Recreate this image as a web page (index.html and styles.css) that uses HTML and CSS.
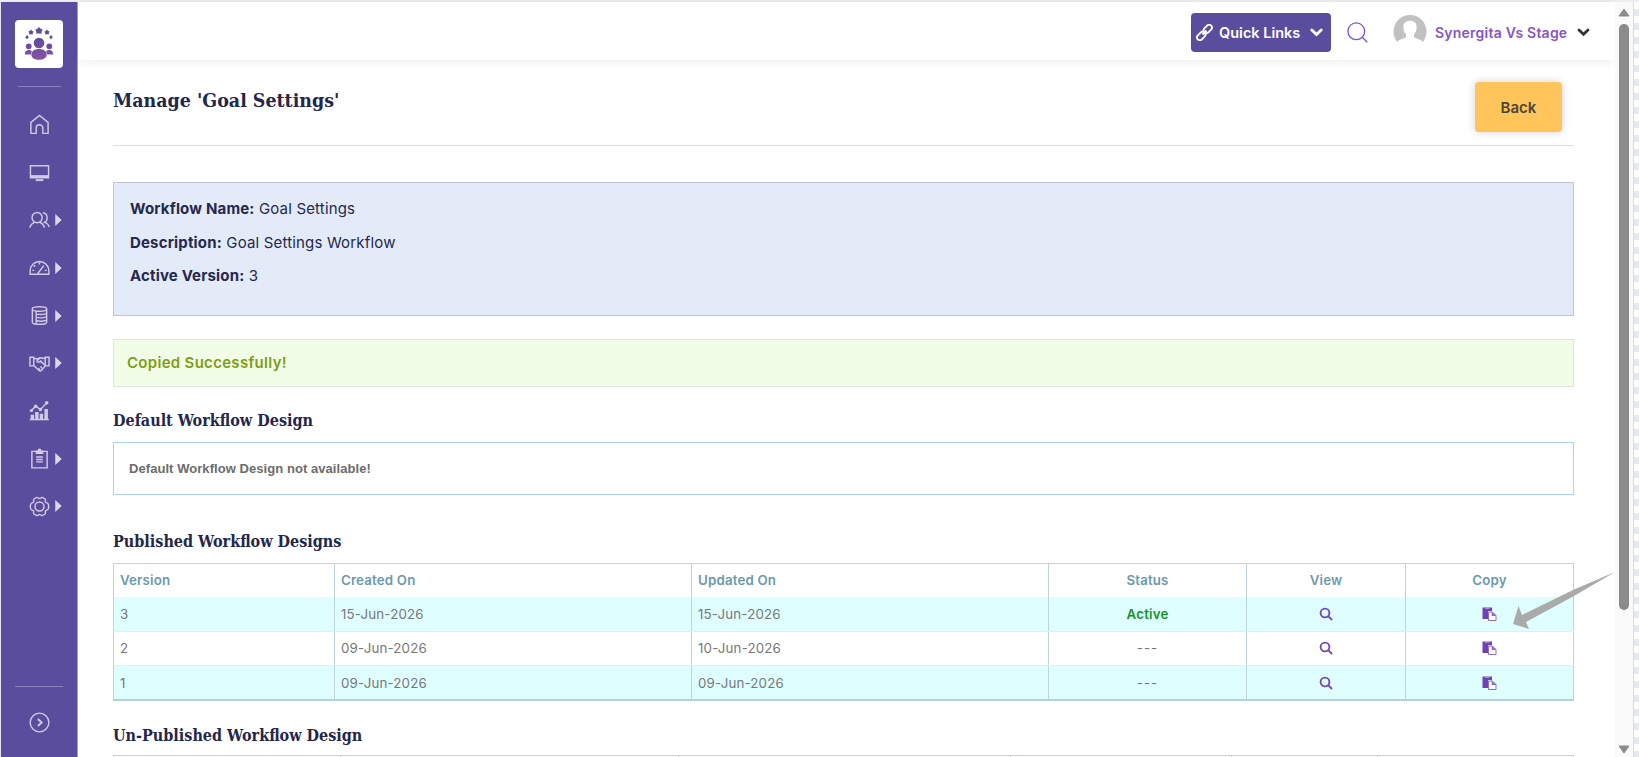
FILE: index.html
```html
<!DOCTYPE html>
<html lang="en">
<head>
    <meta charset="UTF-8">
    <meta name="viewport" content="width=device-width, initial-scale=1.0">
    <title>Manage Goal Settings</title>
    <link rel="stylesheet" href="styles.css">
</head>
<body>
    <!-- shared icons -->
    <svg class="sprite" width="0" height="0">
        <symbol id="caret" viewBox="0 0 7 13"><path d="M0 0L7 6.5L0 13z" fill="#dcd8ea"/></symbol>
        <symbol id="view" viewBox="0 0 14 14"><g fill="none" stroke="#7648b8" stroke-width="1.9"><circle cx="6" cy="6" r="4.4"/><path d="M9.2 9.2L13 13"/></g></symbol>
        <symbol id="copy" viewBox="0 0 15 14">
            <path d="M.5.5H10V4H6v8H.5z" fill="#7040b5"/>
            <path d="M3 1.300h4.500" stroke="#cbbbe6" stroke-width=".8"/>
            <path d="M6.500 5h3.700l3.800 3.500v5H6.500z" fill="#fff" stroke="#8d6ac6"/>
            <path d="M9.700 4.500l4.800 4.500H9.700z" fill="#8d6ac6"/>
        </symbol>
    </svg>

    <div class="app">
        <aside class="sidebar">
            <div class="logo">
                <svg width="30" height="34" viewBox="0 0 30 34">
                    <defs>
                        <linearGradient id="logoFill" x1="0" y1="0" x2="0" y2="34" gradientUnits="userSpaceOnUse">
                            <stop offset=".35" stop-color="#5b4ea0"/>
                            <stop offset="1" stop-color="#8c52a5"/>
                        </linearGradient>
                    </defs>
                    <g fill="url(#logoFill)">
                        <path d="M15 0l1.600 1.800 2.100.8-1 2-.2 2.200-2.500-.4-2.500.4-.2-2.200-1-2 2.100-.8z"/>
                        <path d="M7 2.600l1.200 1.300 1.500.6-.9 1.400-.1 1.700L7 7.200l-1.700.4-.1-1.700-.9-1.400 1.500-.6z"/>
                        <path d="M23 2.600l1.200 1.300 1.500.6-.9 1.400-.1 1.700-1.700-.4-1.700.4-.1-1.700-.9-1.400 1.500-.6z"/>
                        <path d="M3 8.100l1.800 2.100L3 12.300 1.200 10.200z"/>
                        <path d="M27 8.100l1.800 2.100L27 12.300l-1.800-2.100z"/>
                        <circle cx="15" cy="16" r="5.300"/>
                        <circle cx="4.700" cy="19.300" r="2.900"/>
                        <circle cx="25.300" cy="19.300" r="2.900"/>
                        <path d="M.8 27.500c0-3.300 1.800-4.600 4-4.600 1.300 0 2.300.4 3 1.300L7 27.500z"/>
                        <path d="M29.200 27.500c0-3.300-1.800-4.600-4-4.600-1.300 0-2.300.4-3 1.300l.8 3.300z"/>
                        <path d="M7.400 28c0-4 3.200-6 7.600-6s7.600 2 7.600 6c0 3-3.400 4.800-7.600 4.800S7.400 31 7.400 28z"/>
                    </g>
                </svg>
            </div>
            <div class="divider"></div>
            <nav class="menu">
                <a class="menu-item"><svg class="icon" viewBox="0 0 22 22"><path d="M2 8.800L11 1.500l9 7.300v11.500h-5.500v-5.500a3.500 3.500 0 0 0-7 0v5.500H2z"/></svg></a>
                <a class="menu-item"><svg class="icon" viewBox="0 0 22 22"><path d="M1.500 4h19v12.500h-19z"/><path d="M1.500 15h19" stroke-width="2.500"/><path d="M7 19h8" stroke-width="2"/></svg></a>
                <a class="menu-item"><svg class="icon" viewBox="0 0 22 22"><circle cx="8.500" cy="8" r="5.300"/><path d="M.8 18.500c.8-3 2.700-4.700 5-5.500M11.200 13c2.400.8 4.200 2.500 5 5.500M14.500 2.800c5.200.3 6 8 1.700 10.200 2.600.8 4.400 2.500 5 5"/></svg><svg class="caret"><use href="#caret"/></svg></a>
                <a class="menu-item"><svg class="icon" viewBox="0 0 22 22"><path d="M1.200 18v-3.500a9.800 9.800 0 0 1 19.600 0V18z"/><path d="M9 17.500L15.500 9M11 5.500v2.300M5 8.800l1.500 1.300M3.500 14h2M16.500 14h2"/></svg><svg class="caret"><use href="#caret"/></svg></a>
                <a class="menu-item"><svg class="icon" viewBox="0 0 22 22"><path d="M3.500 4v14c0 3 15 3 15 0V4c0-3-15-3-15 0zM3.500 4.500c0 2.700 15 2.700 15 0M7 9c3 1.200 7 1.300 11.500 0M7 12.500c3 1.200 7 1.300 11.500 0M7 16c3 1.200 7 1.300 11.500 0M7.500 7v12"/></svg><svg class="caret"><use href="#caret"/></svg></a>
                <a class="menu-item"><svg class="icon" viewBox="0 0 22 22"><path d="M1 4.500h4v9H1zM17 4.500h4v9h-4zM5 5.500l3.500.8 3-1.300 5.500.8M5 13l5.500 5.300c1 .7 2 .5 2.700-.3L17 13.500M11.500 5L8.300 8.500c.6 1.800 2.500 1.500 4 0L17 13M10 16l1.500 1.500M12 14l1.800 2"/></svg><svg class="caret"><use href="#caret"/></svg></a>
                <a class="menu-item"><svg class="icon" viewBox="0 0 22 22"><path d="M.8 20.500h20"/><path d="M3.500 20v-4.500M8.200 20v-7.500M13 20v-5.500M18 20V9.500" stroke-width="3.600"/><path d="M2.500 11L7 6.500l5 3.500 6.500-7"/><g class="dot"><circle cx="2.500" cy="11" r="1.700"/><circle cx="7" cy="6.500" r="1.800"/><circle cx="12" cy="10" r="1.800"/><circle cx="18.500" cy="3" r="1.900"/></g></svg></a>
                <a class="menu-item"><svg class="icon" viewBox="0 0 22 22"><path d="M3 3.500h16v17.300H3z"/><path class="dot" d="M7 6.300V2.500h2a2 2 0 0 1 4 0h2v3.800z"/><path d="M7.500 9.500h7M7.500 12h7M7.500 14.500h7"/></svg><svg class="caret"><use href="#caret"/></svg></a>
                <a class="menu-item"><svg class="icon" viewBox="0 0 22 22"><path d="M8 1.500c1.200-.5 1.800 1.200 3 1.200s1.800-1.700 3-1.200l2.800 1.600c1 .9-.1 2.400.5 3.300s2.500.7 2.900 1.900v.2l.5 2.500-.5 2.500c-.4 1.300-2.300 1.100-2.900 2.100s.5 2.400-.5 3.300L14 20.500c-1.200.5-1.800-1.200-3-1.200s-1.800 1.700-3 1.200l-2.800-1.600c-1-.9.1-2.300-.5-3.300s-2.500-.8-2.900-2.100L1.300 11l.5-2.500c.4-1.300 2.300-1.100 2.900-2.100s-.5-2.400.5-3.300z"/><circle cx="11" cy="11" r="4.700"/></svg><svg class="caret"><use href="#caret"/></svg></a>
            </nav>
            <div class="divider wide"></div>
            <a class="expand"><svg class="icon" viewBox="0 0 22 22"><circle cx="11" cy="11" r="9.800"/><path d="M9.300 7.300l4 3.700-4 3.700" stroke-width="1.900"/></svg></a>
        </aside>

        <div class="page">
            <header class="topbar">
                <button class="quick-links">
                    <svg width="17" height="17" viewBox="0 0 17 17" fill="none" stroke="#fff" stroke-width="1.900"><rect x="7" y="2.200" width="9.500" height="5.600" rx="2.800" transform="rotate(-45 11.700 5)"/><rect x=".5" y="9.200" width="9.500" height="5.600" rx="2.800" transform="rotate(-45 5.200 12)"/><path d="M6.500 10.500l4-4"/></svg>
                    <span>Quick Links</span>
                    <svg class="chevron" viewBox="0 0 13 9"><path d="M1.800 2l4.700 4.500L11.200 2" stroke="#fff"/></svg>
                </button>
                <svg class="search" viewBox="0 0 21 21" fill="none" stroke="#7f56c2" stroke-width="1.300"><circle cx="9.300" cy="9.300" r="8.400"/><path d="M15.300 15.300l5 5"/></svg>
                <svg class="avatar" viewBox="0 0 34 34"><path d="M4.300 28A16.500 16.500 0 1 1 29.700 28C28 25.500 23.500 24.800 21 23.300v-3c2-2 2.600-4.500 2.600-7.300 0-4-2.600-6.200-6.600-6.200S10.400 9 10.400 13c0 2.800.6 5.300 2.600 7.300v3C10.500 24.800 6 25.500 4.300 28z" fill="#c1c1c1"/></svg>
                <span class="user-name">Synergita Vs Stage</span>
                <svg class="chevron" viewBox="0 0 13 9"><path d="M2 2l4.500 4.300L11 2" stroke="#333"/></svg>
            </header>

            <main class="content">
                <div class="page-head">
                    <h1>Manage 'Goal Settings'</h1>
                    <button class="back">Back</button>
                </div>

                <section class="summary">
                    <p><b>Workflow Name:</b> Goal Settings</p>
                    <p><b>Description:</b> Goal Settings Workflow</p>
                    <p><b>Active Version:</b> 3</p>
                </section>

                <div class="success">Copied Successfully!</div>

                <h2 class="default-title">Default Workflow Design</h2>
                <div class="empty">Default Workflow Design not available!</div>

                <h2 class="published-title">Published Workflow Designs</h2>
                <table class="designs">
                    <colgroup>
                        <col class="col-version"><col class="col-date"><col class="col-date"><col class="col-status"><col class="col-view"><col>
                    </colgroup>
                    <thead>
                        <tr><th>Version</th><th>Created On</th><th>Updated On</th><th class="center">Status</th><th class="center">View</th><th class="center">Copy</th></tr>
                    </thead>
                    <tbody>
                        <tr>
                            <td>3</td><td>15-Jun-2026</td><td>15-Jun-2026</td><td class="center active">Active</td>
                            <td class="center"><svg class="view"><use href="#view"/></svg></td><td class="center"><svg class="copy"><use href="#copy"/></svg></td>
                        </tr>
                        <tr>
                            <td>2</td><td>09-Jun-2026</td><td>10-Jun-2026</td><td class="center dash">---</td>
                            <td class="center"><svg class="view"><use href="#view"/></svg></td><td class="center"><svg class="copy"><use href="#copy"/></svg></td>
                        </tr>
                        <tr>
                            <td>1</td><td>09-Jun-2026</td><td>09-Jun-2026</td><td class="center dash">---</td>
                            <td class="center"><svg class="view"><use href="#view"/></svg></td><td class="center"><svg class="copy"><use href="#copy"/></svg></td>
                        </tr>
                    </tbody>
                </table>

                <h2 class="unpublished-title">Un-Published Workflow Design</h2>
                <div class="next-table"><i></i><i></i><i></i><i></i><i></i><i></i></div>
            </main>
        </div>

        <div class="scrollbar">
            <svg width="12" height="9" viewBox="0 0 12 9"><path d="M6 1l5 7H1z" fill="#8b8b8b" stroke="#8b8b8b" stroke-linejoin="round"/></svg>
            <div class="thumb"></div>
            <svg class="down" width="12" height="9" viewBox="0 0 12 9"><path d="M6 8l5-7H1z" fill="#8b8b8b" stroke="#8b8b8b" stroke-linejoin="round"/></svg>
        </div>
        <div class="edge"></div>
    </div>

    <!-- arrow pointing at the copy action -->
    <svg class="arrow" viewBox="0 0 102 58"><path d="M102 0L61 17.500 9 43 5.500 34 0 52l16 5-3-7L61 24z" fill="#aaa"/></svg>
</body>
</html>
```
FILE: styles.css
```css
* {
    box-sizing: border-box;
    margin: 0;
    padding: 0;
}

body {
    height: 757px;
    overflow: hidden;
    background: #fff;
    font-family: 'Inter', sans-serif;
    color: #25284b;
}

svg {
    display: block;
    flex: none;
}

.sprite {
    position: absolute;
}

.app {
    display: flex;
    height: 757px;
    border-top: 2px solid #eeeeee;
    border-left: 1px solid #dfe5e9;
}

/* sidebar */
.sidebar {
    display: flex;
    flex-direction: column;
    flex: none;
    align-items: center;
    width: 77px;
    padding-top: 18px;
    background: #5b4d9d;
    border-right: 1px solid #a79fcf;
}

.logo {
    display: flex;
    align-items: center;
    justify-content: center;
    width: 48px;
    height: 48px;
    background: #fff;
    border-radius: 4px;
}

.divider {
    width: 43px;
    height: 1px;
    margin-top: 18px;
    background: #8c83ba;
}

.divider.wide {
    width: 48px;
    margin-top: auto;
}

.menu {
    width: 100%;
    margin-top: 14px;
}

.menu-item {
    display: flex;
    align-items: center;
    height: 47.7px;
    padding-left: 28px;
    gap: 5px;
}

.icon {
    width: 21px;
    height: 21px;
    fill: none;
    stroke: #d0cbe3;
    stroke-width: 1.5;
}

.icon .dot {
    fill: #d0cbe3;
    stroke: none;
}

.caret {
    width: 7px;
    height: 12px;
}

.expand {
    margin: 25px 0 24px;
}

/* top bar */
.page {
    display: flex;
    flex-direction: column;
    flex: 1;
    background: #fff;
}

.topbar {
    display: flex;
    flex: none;
    align-items: center;
    justify-content: flex-end;
    height: 58px;
    padding: 2px 25px 0 0;
    box-shadow: 0 2px 10px rgba(0, 0, 0, 0.07);
}

.quick-links {
    display: flex;
    align-items: center;
    width: 140px;
    height: 39px;
    padding: 0 8px 0 5px;
    background: #5b4d9d;
    border: 0;
    border-radius: 4px;
    font: 600 14.5px 'Inter', sans-serif;
    color: #fff;
}

.quick-links span {
    flex: 1;
    text-align: left;
    padding-left: 6px;
    white-space: nowrap;
}

.chevron {
    width: 13px;
    height: 9px;
    fill: none;
    stroke-width: 2.8;
    stroke-linecap: round;
}

.search {
    width: 21px;
    height: 21px;
    margin-left: 16px;
}

.avatar {
    width: 34px;
    height: 34px;
    margin: -3px 0 0 25px;
}

.user-name {
    width: 132px;
    margin: 0 10px 0 8px;
    font-size: 14px;
    font-weight: 600;
    letter-spacing: 0.22px;
    color: #8655c2;
    white-space: nowrap;
}

/* content */
.content {
    flex: 1;
    padding: 22px 41px 0 35px;
}

.page-head {
    display: flex;
    justify-content: space-between;
    height: 64px;
    padding-right: 12px;
    border-bottom: 1px solid #dce0e0;
}

h1, h2 {
    font-family: 'DejaVu Serif Condensed', 'DejaVu Serif', serif;
    font-stretch: condensed;
    font-weight: 700;
    color: #24274a;
    white-space: nowrap;
}

h1 {
    font-size: 19.4px;
    line-height: 38px;
}

h2 {
    font-size: 16px;
    line-height: 22px;
}

.back {
    width: 87px;
    height: 50px;
    background: #ffc55a;
    border: 0;
    border-radius: 4px;
    box-shadow: 0 0 8px rgba(0, 0, 0, 0.18);
    font: 600 15px 'Inter', sans-serif;
    color: #4b4637;
}

.summary {
    height: 134px;
    margin-top: 36px;
    padding: 9px 16px;
    background: #e3eaf8;
    border: 1px solid #c3c6d2;
    font-size: 15px;
    letter-spacing: 0.17px;
    line-height: 33.5px;
}

.success {
    height: 48px;
    margin-top: 23px;
    padding-left: 13px;
    background: #f2fde8;
    border: 1px solid #dfe5d9;
    font-size: 15px;
    font-weight: 600;
    letter-spacing: 0.3px;
    line-height: 46px;
    color: #7e9e13;
}

.default-title {
    margin-top: 23px;
}

.empty {
    height: 53px;
    margin-top: 10px;
    padding-left: 15px;
    border: 1px solid #acd5e9;
    font: 700 13px/51px 'Liberation Sans', sans-serif;
    letter-spacing: 0.06px;
    color: #6c6c6c;
}

.published-title {
    margin-top: 36px;
}

.designs {
    width: 1461px;
    margin-top: 10px;
    table-layout: fixed;
    border-collapse: collapse;
    border: 1px solid #bed3da;
    border-bottom: 2px solid #b6ced5;
    font-size: 13.3px;
    letter-spacing: 0.17px;
    color: #777;
}

.designs th,
.designs td {
    height: 34.5px;
    padding: 0 6px;
    border-left: 1px solid #bed3da;
    text-align: left;
}

.designs th {
    height: 33px;
    font-weight: 600;
    color: #6c9aac;
}

.designs td {
    border-bottom: 1px solid #e2eff0;
}

.designs tbody tr:nth-child(odd) {
    background: #dffeff;
}

.designs .center {
    text-align: center;
}

.designs .active {
    font-weight: 600;
    color: #159426;
}

.designs .dash {
    letter-spacing: 1px;
}

.designs svg {
    display: block;
    margin: 0 auto;
}

.view {
    width: 14px;
    height: 14px;
}

.copy {
    width: 15px;
    height: 14px;
}

.col-version { width: 221px; }
.col-date { width: 357px; }
.col-status { width: 198px; }
.col-view { width: 159px; }

.unpublished-title {
    margin-top: 24px;
}

.next-table {
    display: grid;
    grid-template-columns: 226px 338px 332px 221px 146px 1fr;
    height: 4px;
    margin-top: 8px;
    border: 1px solid #bed3da;
    border-bottom: 0;
}

.next-table i + i {
    border-left: 1px solid #bed3da;
}

/* scrollbar and right edge */
.scrollbar {
    display: flex;
    flex-direction: column;
    flex: none;
    align-items: center;
    width: 18px;
    padding-top: 6px;
    background: #fafafa;
}

.thumb {
    width: 10px;
    height: 586px;
    margin-top: 7px;
    background: #8b8b8b;
    border-radius: 5px;
}

.scrollbar .down {
    margin: auto 0 3px;
}

.edge {
    flex: none;
    width: 6px;
    border-left: 1px solid #d5dce0;
    background: repeating-conic-gradient(#e5e8ec 0 25%, #fff 0 50%) 0 0 / 14px 14px;
}

.arrow {
    position: absolute;
    left: 1513px;
    top: 572px;
    width: 102px;
    height: 58px;
}
```
